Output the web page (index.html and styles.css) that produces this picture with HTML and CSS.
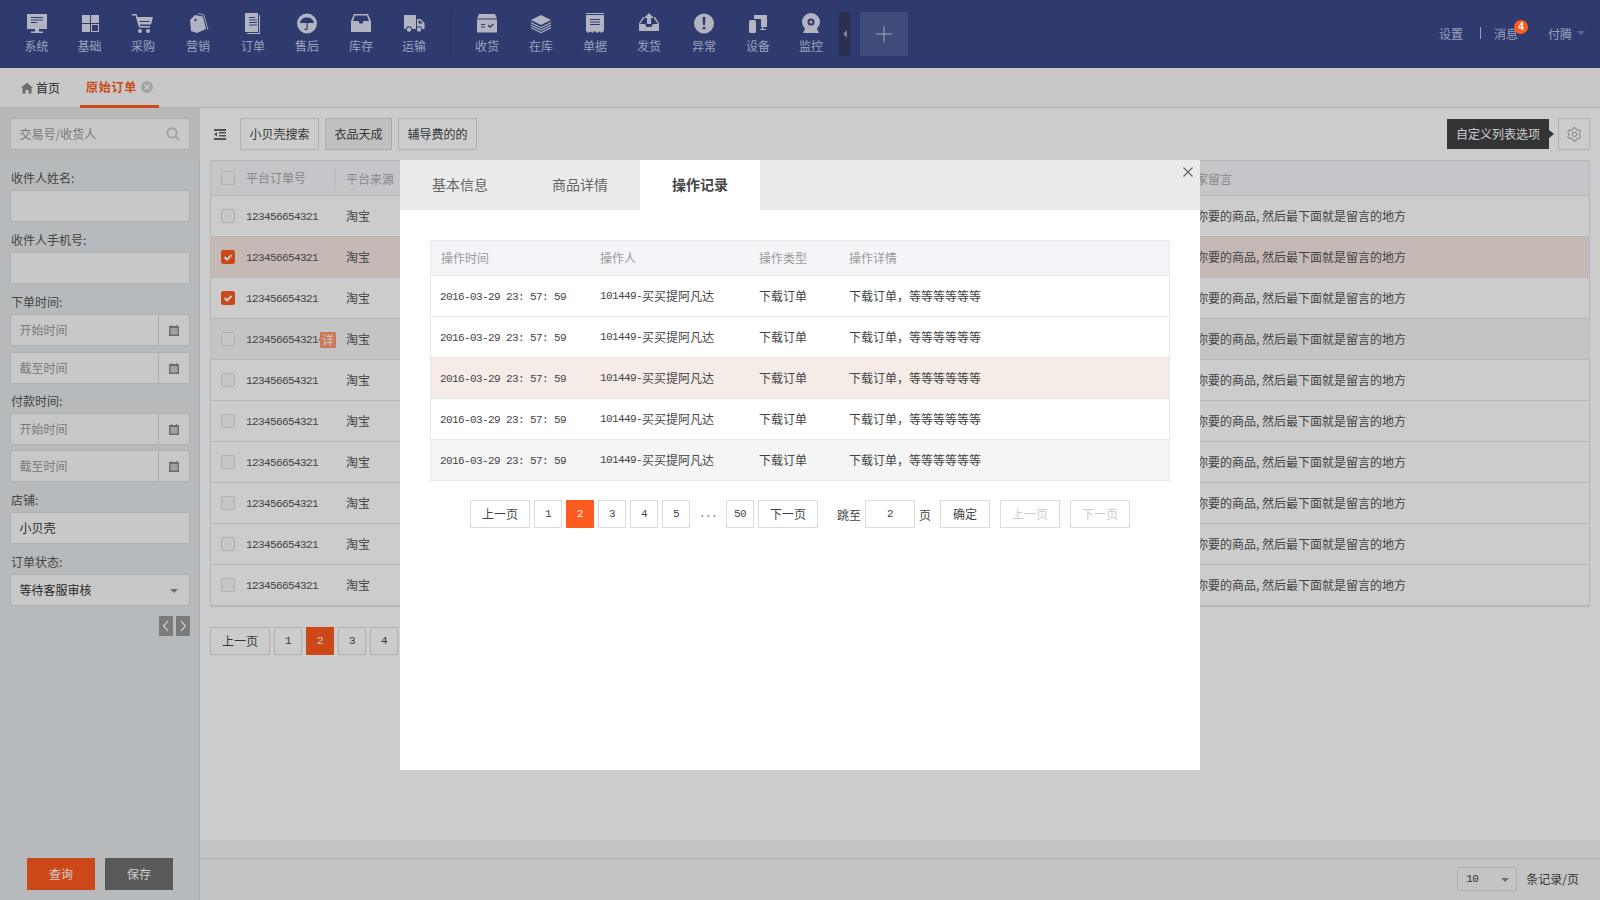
FILE: index.html
```html
<!DOCTYPE html>
<html lang="zh-CN">
<head>
    <meta charset="UTF-8">
    <title>原始订单</title>
    <link rel="stylesheet" href="styles.css">
</head>
<body>
<div class="app">
    <header class="topnav">
        <nav class="nav-group">
            <a class="nav-item narrow"><svg viewBox="0 0 22 22"><rect x="1" y="1" width="20" height="15"/><rect x="9" y="16" width="4" height="3"/><rect x="5" y="18.500" width="12" height="1.500"/><path class="cut" d="M5 4h12v1H5zM5 6.500h12v1H5zM5 9h6v1H5z"/></svg><span>系统</span></a>
            <a class="nav-item narrow"><svg viewBox="0 0 22 22"><rect x="3" y="2" width="8" height="8"/><rect x="12" y="2" width="8" height="8"/><rect x="3" y="11" width="8" height="8"/><path d="M12 11h8v8h-8zM13 12v6h6v-6z" fill-rule="evenodd"/></svg><span>基础</span></a>
            <a class="nav-item"><svg viewBox="0 0 22 22"><path d="M0 1h4.500l1 3H21l-2 7.500H7.800l.4 1.500H18v1.500H7L3.500 2.500H0z"/><circle cx="8" cy="18" r="2"/><circle cx="16" cy="18" r="2"/><path class="cut" d="M7.500 8h10v1h-10z"/></svg><span>采购</span></a>
            <a class="nav-item wide"><svg viewBox="0 0 22 22"><path d="M8 2l8 1.500L19 16l-9 4-6-2-1-11z"/><path class="line" d="M11 .5l6 1.500 4 15"/><circle class="cut" cx="8.500" cy="7" r="1.200"/></svg><span>营销</span></a>
            <a class="nav-item"><svg viewBox="0 0 22 22"><path d="M3 0h13v19H3z"/><path d="M17 2h1v19H5v-1h12z"/><path class="cut" d="M7 4h6v1H7zM7 6.500h8v1H7zM7 9h8v1H7zM7 11.500h8v1H7z"/></svg><span>订单</span></a>
            <a class="nav-item"><svg viewBox="0 0 22 22"><circle cx="11" cy="10.500" r="10"/><path class="cut" d="M4 10c.5-3.500 3.500-5.500 7-5.500s6.500 2 7 5.500zM10.500 10h1.200v5.500q0 1.500-1.500 1.500H8.500v-1.200h1.500q.5 0 .5-.5z"/></svg><span>售后</span></a>
            <a class="nav-item"><svg viewBox="0 0 22 22"><path d="M4 1h14l3 7v11H1V8zM5 2.500L3 8h5.500l1 2.500h3L13.500 8H19l-2-5.500z" fill-rule="evenodd"/></svg><span>库存</span></a>
            <a class="nav-item last"><svg viewBox="0 0 22 22"><path d="M1 2h12v14H1z"/><path d="M14 6h3.500l4 4v6H14zM15.500 7.500v3h4.500l-3-3z" fill-rule="evenodd"/><circle class="cut" cx="6" cy="16.500" r="3.200"/><circle class="cut" cx="16" cy="16.500" r="3.200"/><circle cx="6" cy="16.500" r="2.200"/><circle cx="16" cy="16.500" r="2.200"/></svg><span>运输</span></a>
        </nav>
        <div class="nav-divider"></div>
        <nav class="nav-group">
            <a class="nav-item"><svg viewBox="0 0 22 22"><path d="M3 1h16l2 4.500H1z"/><rect x="1" y="6.500" width="20" height="13"/><path class="cut" d="M5 11h4v1H5zM5 13.500h4v1H5z"/><path class="cut-line" d="M12 12l2 2 3.500-3"/></svg><span>收货</span></a>
            <a class="nav-item"><svg viewBox="0 0 22 22"><path d="M11 2l10 5-10 5L1 7z"/><path d="M1 9l10 5 10-5v1.200l-10 5-10-5zM1 11.500l10 5 10-5v1.200l-10 5-10-5zM1 14l10 5 10-5v1.200l-10 5-10-5z"/></svg><span>在库</span></a>
            <a class="nav-item"><svg viewBox="0 0 22 22"><path d="M2 0h18v1H2z"/><path d="M2 2h18v16l-2.500 2-2-1.500-2 1.500-3-2-2 2-2-1.500L4 20l-2-2z"/><path class="cut" d="M6 6h10v1H6zM6 8.500h10v1H6zM6 11h10v1H6z"/></svg><span>单据</span></a>
            <a class="nav-item"><svg viewBox="0 0 22 22"><path d="M11 0l5 5h-3v6H9V5H6z"/><path d="M5 4h1v1.500H5.800L2 11h5l1.500 3h5L15 11h5l-3.800-5.500H16V4h1l4 6.500V18H1v-7.500z"/></svg><span>发货</span></a>
            <a class="nav-item wide"><svg viewBox="0 0 22 22"><circle cx="11" cy="10.500" r="10"/><path class="cut" d="M9.500 4h3l-.5 8h-2z"/><circle class="cut" cx="11" cy="15" r="1.500"/></svg><span>异常</span></a>
            <a class="nav-item last"><svg viewBox="0 0 22 22"><path d="M7 2h13v12h-6V6H7z"/><rect x="2" y="7" width="7" height="13" rx="1.500"/><path d="M15 14h1.500v2H19v1h-6v-1h2z"/></svg><span>设备</span></a>
            <a class="nav-item"><svg viewBox="0 0 22 22"><circle cx="11" cy="9" r="9"/><circle class="cut" cx="11" cy="9" r="3.500"/><circle cx="11" cy="9" r="1.500"/><path d="M5.500 15h11L19 20H3z"/></svg><span>监控</span></a>
        </nav>
        <div class="nav-collapse"><i class="tri-left"></i></div>
        <div class="nav-add"><svg viewBox="0 0 16 16"><path d="M7.500 0h1v7.500H16v1H8.500V16h-1V8.500H0v-1h7.500z"/></svg></div>
        <div class="nav-user">
            <span>设置</span>
            <span class="nav-sep"></span>
            <span class="nav-msg">消息<b class="badge">4</b></span>
            <span class="nav-name">付腾<i class="tri-down"></i></span>
        </div>
    </header>

    <div class="tabbar">
        <a class="tab-home"><svg viewBox="0 0 12 12"><path d="M6 .5l6 5.500h-1.500v5.500H7.500V8h-3v3.500h-3V6H0z"/></svg>首页</a>
        <a class="tab-current">原始订单<svg class="tab-close" viewBox="0 0 12 12"><circle cx="6" cy="6" r="6"/><path class="x" d="M3.500 3.500l5 5M8.500 3.500l-5 5"/></svg></a>
    </div>

    <div class="workspace">
        <aside class="sidebar">
            <div class="side-search">
                <div class="input placeholder">交易号/收货人
                    <svg class="search-icon" viewBox="0 0 14 14"><circle cx="6" cy="6" r="4.700"/><path d="M9.500 9.500l3.500 3.500"/></svg>
                </div>
            </div>
            <div class="side-form">
                <label class="field-label">收件人姓名:</label>
                <div class="input"></div>
                <label class="field-label">收件人手机号:</label>
                <div class="input"></div>
                <label class="field-label">下单时间:</label>
                <div class="date-pair">
                    <div class="input date placeholder">开始时间<span class="date-btn"><svg viewBox="0 0 12 12"><path d="M1 2h2V1h1v1h4V1h1v1h2v10H1z"/><path class="cut-grid" d="M2 5h8M2 7h8M2 9h8M4 4v7M6 4v7M8 4v7"/></svg></span></div>
                    <div class="input date placeholder">截至时间<span class="date-btn"><svg viewBox="0 0 12 12"><path d="M1 2h2V1h1v1h4V1h1v1h2v10H1z"/><path class="cut-grid" d="M2 5h8M2 7h8M2 9h8M4 4v7M6 4v7M8 4v7"/></svg></span></div>
                </div>
                <label class="field-label">付款时间:</label>
                <div class="date-pair tight">
                    <div class="input date placeholder">开始时间<span class="date-btn"><svg viewBox="0 0 12 12"><path d="M1 2h2V1h1v1h4V1h1v1h2v10H1z"/><path class="cut-grid" d="M2 5h8M2 7h8M2 9h8M4 4v7M6 4v7M8 4v7"/></svg></span></div>
                    <div class="input date placeholder">截至时间<span class="date-btn"><svg viewBox="0 0 12 12"><path d="M1 2h2V1h1v1h4V1h1v1h2v10H1z"/><path class="cut-grid" d="M2 5h8M2 7h8M2 9h8M4 4v7M6 4v7M8 4v7"/></svg></span></div>
                </div>
                <label class="field-label">店铺:</label>
                <div class="input">小贝壳</div>
                <label class="field-label">订单状态:</label>
                <div class="input select">等待客服审核<i class="tri-down"></i></div>
                <div class="side-arrows">
                    <a><svg viewBox="0 0 14 20"><path d="M9 5L4.500 10 9 15"/></svg></a>
                    <a><svg viewBox="0 0 14 20"><path d="M5 5l4.500 5L5 15"/></svg></a>
                </div>
            </div>
            <div class="side-actions">
                <a class="btn-query">查询</a>
                <a class="btn-save">保存</a>
            </div>
        </aside>

        <main class="content">
            <div class="toolbar">
                <svg class="list-toggle" viewBox="0 0 12 11"><path d="M0 0h12v2H0zM5 3h7v1.500H5zM5 6h7v1.500H5zM0 9h12v2H0zM3 3v4.500L0 5.200z"/></svg>
                <a class="tool-btn">小贝壳搜索</a>
                <a class="tool-btn active">衣品天成</a>
                <a class="tool-btn">辅导费的的</a>
                <div class="toolbar-right">
                    <div class="tooltip">自定义列表选项</div>
                    <a class="gear-btn"><svg viewBox="0 0 16 16"><path d="M6.500 1h3l.4 2 1.500.8 1.900-.8 1.500 2.600-1.500 1.300v1.800l1.500 1.300-1.500 2.600-1.900-.8-1.500.8-.4 2.400h-3l-.4-2.400-1.500-.8-1.900.8L.7 10l1.500-1.300V6.900L.7 5.600l1.500-2.600 1.900.8 1.500-.8z"/><circle cx="8" cy="7.800" r="2.300"/></svg></a>
                </div>
            </div>

            <div class="order-table">
                <div class="order-row head"><span class="check"></span><span class="col-divided">平台订单号</span><span>平台来源</span><span>买家留言</span></div>
                <div class="order-row"><span class="check"></span><span class="num">123456654321</span><span>淘宝</span><span>选你要的商品, 然后最下面就是留言的地方</span></div>
                <div class="order-row picked"><span class="check on"><svg viewBox="0 0 14 14"><path d="M3.500 7l2.500 2.500 4.500-4.500"/></svg></span><span class="num">123456654321</span><span>淘宝</span><span>选你要的商品, 然后最下面就是留言的地方</span></div>
                <div class="order-row"><span class="check on"><svg viewBox="0 0 14 14"><path d="M3.500 7l2.500 2.500 4.500-4.500"/></svg></span><span class="num">123456654321</span><span>淘宝</span><span>选你要的商品, 然后最下面就是留言的地方</span></div>
                <div class="order-row hover"><span class="check"></span><span class="num has-tag">123456654321<em class="detail-tag">详</em></span><span>淘宝</span><span>选你要的商品, 然后最下面就是留言的地方</span></div>
                <div class="order-row"><span class="check"></span><span class="num">123456654321</span><span>淘宝</span><span>选你要的商品, 然后最下面就是留言的地方</span></div>
                <div class="order-row"><span class="check"></span><span class="num">123456654321</span><span>淘宝</span><span>选你要的商品, 然后最下面就是留言的地方</span></div>
                <div class="order-row"><span class="check"></span><span class="num">123456654321</span><span>淘宝</span><span>选你要的商品, 然后最下面就是留言的地方</span></div>
                <div class="order-row"><span class="check"></span><span class="num">123456654321</span><span>淘宝</span><span>选你要的商品, 然后最下面就是留言的地方</span></div>
                <div class="order-row"><span class="check"></span><span class="num">123456654321</span><span>淘宝</span><span>选你要的商品, 然后最下面就是留言的地方</span></div>
                <div class="order-row"><span class="check"></span><span class="num">123456654321</span><span>淘宝</span><span>选你要的商品, 然后最下面就是留言的地方</span></div>
            </div>

            <div class="pager main-pager">
                <a class="page wide">上一页</a>
                <a class="page num">1</a>
                <a class="page num current">2</a>
                <a class="page num">3</a>
                <a class="page num">4</a>
                <a class="page num">5</a>
            </div>

            <div class="content-foot">
                <div class="page-size num">10<i class="tri-down"></i></div>
                <span>条记录/页</span>
            </div>
        </main>
    </div>
</div>

<div class="overlay"></div>

<section class="modal">
    <div class="modal-tabs">
        <a class="modal-tab">基本信息</a>
        <a class="modal-tab">商品详情</a>
        <a class="modal-tab active">操作记录</a>
    </div>
    <svg class="modal-close" viewBox="0 0 10 10"><path d="M.5.500l9 9M9.500.500l-9 9"/></svg>

    <div class="log-table">
        <div class="log-row head"><span>操作时间</span><span>操作人</span><span>操作类型</span><span>操作详情</span></div>
        <div class="log-row"><span class="num">2016-03-29 23: 57: 59</span><span><i class="num">101449-</i>买买提阿凡达</span><span>下载订单</span><span>下载订单，等等等等等等</span></div>
        <div class="log-row"><span class="num">2016-03-29 23: 57: 59</span><span><i class="num">101449-</i>买买提阿凡达</span><span>下载订单</span><span>下载订单，等等等等等等</span></div>
        <div class="log-row picked"><span class="num">2016-03-29 23: 57: 59</span><span><i class="num">101449-</i>买买提阿凡达</span><span>下载订单</span><span>下载订单，等等等等等等</span></div>
        <div class="log-row"><span class="num">2016-03-29 23: 57: 59</span><span><i class="num">101449-</i>买买提阿凡达</span><span>下载订单</span><span>下载订单，等等等等等等</span></div>
        <div class="log-row grey"><span class="num">2016-03-29 23: 57: 59</span><span><i class="num">101449-</i>买买提阿凡达</span><span>下载订单</span><span>下载订单，等等等等等等</span></div>
    </div>

    <div class="pager modal-pager">
        <a class="page wide">上一页</a>
        <a class="page num">1</a>
        <a class="page num current">2</a>
        <a class="page num">3</a>
        <a class="page num">4</a>
        <a class="page num">5</a>
        <span class="page-gap num">...</span>
        <a class="page num">50</a>
        <a class="page wide">下一页</a>
        <span class="jump-label">跳至</span>
        <span class="jump-input num">2</span>
        <span class="jump-unit">页</span>
        <a class="page ok">确定</a>
        <a class="page wide off">上一页</a>
        <a class="page wide off last-page">下一页</a>
    </div>
</section>
</body>
</html>
```

FILE: styles.css
```css
* {
	box-sizing: border-box;
}

html, body {
	margin: 0;
	height: 900px;
	overflow: hidden;
}

body {
	font-family: "Noto Sans CJK SC", "Liberation Sans", sans-serif;
	font-size: 12px;
	color: #444;
	background: #fff;
}

i, em {
	font-style: normal;
}

.num {
	font-family: "Liberation Mono", "Noto Sans CJK SC", monospace;
	font-size: 11px;
	letter-spacing: -0.6px;
}

.app {
	display: flex;
	flex-direction: column;
	height: 900px;
}

/* top navigation */
.topnav {
	height: 68px;
	flex: none;
	display: flex;
	align-items: flex-start;
	padding: 12px 0 0 10px;
	background: #3b498b;
	color: #c4c9e8;
}

.nav-group {
	display: flex;
}

.nav-item {
	width: 54px;
	height: 44px;
	display: flex;
	flex-direction: column;
	align-items: center;
}

.nav-item.narrow {
	width: 53px;
}

.nav-item.wide {
	width: 56px;
}

.nav-item.last {
	width: 52px;
}

.nav-item svg {
	width: 22px;
	height: 22px;
	margin-top: 1px;
	fill: #dfe2f2;
}

.nav-item span {
	line-height: 16px;
	margin-top: 3px;
}

.nav-item .cut {
	fill: #3b498b;
}

.nav-item .cut-line {
	fill: none;
	stroke: #3b498b;
	stroke-width: 1.300;
}

.nav-item .line {
	fill: none;
	stroke: #dfe2f2;
	stroke-width: 0.800;
}

.nav-divider {
	width: 1px;
	height: 44px;
	margin: 0 9px 0 10px;
	background: #333a60;
}

.nav-collapse {
	width: 11px;
	height: 44px;
	margin-left: 1px;
	display: flex;
	align-items: center;
	justify-content: center;
	background: #363d66;
}

.tri-left {
	border-top: 4px solid transparent;
	border-bottom: 4px solid transparent;
	border-right: 4px solid #9da1b8;
}

.nav-add {
	width: 48px;
	height: 44px;
	margin-left: 10px;
	display: flex;
	align-items: center;
	justify-content: center;
	background: #4f5e96;
}

.nav-add svg {
	width: 16px;
	height: 16px;
	fill: #d0d4e8;
}

.nav-user {
	margin-left: auto;
	height: 42px;
	display: flex;
	align-items: center;
	padding-right: 15px;
}

.nav-sep {
	width: 1px;
	height: 12px;
	margin: 0 13px 0 17px;
	background: #c4c9e8;
}

.nav-msg {
	position: relative;
	margin-right: 30px;
}

.badge {
	position: absolute;
	left: 20px;
	top: -5px;
	z-index: 5;
	width: 14px;
	height: 14px;
	border-radius: 50%;
	background: #ff5b1f;
	color: #fff;
	font-size: 10px;
	line-height: 14px;
	text-align: center;
	font-family: "Liberation Sans", sans-serif;
}

.nav-name {
	display: flex;
	align-items: center;
}

.tri-down {
	display: inline-block;
	border-left: 4px solid transparent;
	border-right: 4px solid transparent;
	border-top: 4px solid #888;
}

.nav-name .tri-down {
	margin-left: 5px;
	border-top-color: #7880ac;
}

/* page tabs */
.tabbar {
	height: 40px;
	flex: none;
	display: flex;
	background: #fafafa;
	border-bottom: 1px solid #dcdcdc;
}

.tab-home {
	display: flex;
	align-items: center;
	padding: 0 0 0 21px;
	width: 80px;
	color: #333;
}

.tab-home svg {
	width: 12px;
	height: 12px;
	margin-right: 3px;
	fill: #888;
}

.tab-current {
	width: 79px;
	height: 40px;
	display: flex;
	align-items: center;
	padding-left: 6px;
	color: #ff5b1f;
	font-weight: 700;
	letter-spacing: 0.75px;
	border-bottom: 3px solid #ff5b1f;
}

.tab-close {
	width: 12px;
	height: 12px;
	margin-left: 4px;
	flex: none;
	fill: #ccc;
}

.tab-close .x {
	stroke: #fafafa;
	stroke-width: 1.500;
}

/* main area */
.workspace {
	flex: 1;
	display: flex;
	min-height: 0;
}

.sidebar {
	width: 200px;
	flex: none;
	display: flex;
	flex-direction: column;
	background: #e4e9ec;
	border-right: 1px solid #d6d9dc;
}

.side-search {
	height: 52px;
	padding: 10px 10px;
	margin-right: -1px;
	background: #e6e6e6;
}

.input {
	position: relative;
	height: 32px;
	line-height: 30px;
	padding-left: 8.5px;
	background: #fafafa;
	border: 1px solid #dcdcdc;
	color: #333;
}

.placeholder {
	color: #999;
}

.search-icon {
	position: absolute;
	right: 9px;
	top: 8px;
	width: 14px;
	height: 14px;
	fill: none;
	stroke: #ccc;
	stroke-width: 2;
}

.side-form {
	padding: 6px 9px 0 10px;
	display: flex;
	flex-direction: column;
}

.field-label {
	height: 24px;
	line-height: 24px;
	color: #555;
	padding-left: 1px;
}

.field-label ~ .input {
	margin-bottom: 6px;
}

.date-pair {
	display: flex;
	flex-direction: column;
	gap: 6px;
	margin-bottom: 5px;
}

.date-pair.tight {
	gap: 5px;
	margin-bottom: 6px;
}

.field-label ~ .date-pair .input {
	margin-bottom: 0;
}

.date {
	padding-right: 31px;
}

.date-btn {
	position: absolute;
	right: 0;
	top: 0;
	width: 31px;
	height: 30px;
	display: flex;
	align-items: center;
	justify-content: center;
	border-left: 1px solid #dcdcdc;
}

.date-btn svg {
	width: 12px;
	height: 12px;
	fill: #888;
}

.date-btn .cut-grid {
	fill: none;
	stroke: #fafafa;
	stroke-width: 0.700;
}

.select .tri-down {
	position: absolute;
	right: 11px;
	top: 14px;
}

.side-arrows {
	display: flex;
	justify-content: flex-end;
	gap: 3px;
	margin-top: 4px;
}

.side-arrows a {
	width: 14px;
	height: 20px;
	background: #9a9a9a;
}

.side-arrows svg {
	display: block;
	width: 14px;
	height: 20px;
	fill: none;
	stroke: #fff;
	stroke-width: 1.200;
}

.side-actions {
	margin-top: auto;
	display: flex;
	justify-content: center;
	gap: 10px;
	padding: 0 0 10px 1px;
}

.side-actions a {
	width: 68px;
	height: 32px;
	line-height: 32px;
	text-align: center;
	color: #fff;
}

.btn-query {
	background: #ff5b1f;
}

.btn-save {
	background: #707070;
}

.content {
	flex: 1;
	min-width: 0;
	display: flex;
	flex-direction: column;
	padding: 10px 10px 0;
}

.toolbar {
	height: 32px;
	flex: none;
	display: flex;
	align-items: center;
}

.list-toggle {
	width: 12px;
	height: 11px;
	margin: 0 14px 0 4px;
	fill: #666;
}

.tool-btn {
	height: 32px;
	line-height: 30px;
	padding: 0 8.5px;
	margin-right: 6px;
	border: 1px solid #dcdcdc;
	color: #444;
}

.tool-btn.active {
	background: #f0f0f0;
	border-color: #d6d6d6;
}

.toolbar-right {
	margin-left: auto;
	display: flex;
	align-items: center;
}

.tooltip {
	position: relative;
	width: 102px;
	height: 30px;
	line-height: 30px;
	text-align: center;
	margin-right: 9px;
	background: #404143;
	color: #fff;
}

.tooltip::after {
	content: "";
	position: absolute;
	right: -5px;
	top: 11px;
	border-top: 4px solid transparent;
	border-bottom: 4px solid transparent;
	border-left: 5px solid #404143;
}

.gear-btn {
	width: 32px;
	height: 32px;
	display: flex;
	align-items: center;
	justify-content: center;
	border: 1px solid #dcdcdc;
}

.gear-btn svg {
	width: 15px;
	height: 15px;
	fill: none;
	stroke: #999;
	stroke-width: 1;
}

.order-table {
	margin-top: 10px;
	flex: none;
	border: 1px solid #e4e4e4;
	border-top: 0;
}

.order-row {
	height: 41px;
	display: grid;
	grid-template-columns: 35px 100px 838px 1fr;
	align-items: center;
	padding-bottom: 2px;
	border-bottom: 1px solid #e4e4e4;
	color: #555;
	white-space: nowrap;
}

.order-row .num {
	margin-top: 4px;
}

.order-row.head {
	height: 36px;
	padding-bottom: 0;
	background: #f6f8fc;
	color: #aaa;
	border-top: 1px solid #e4e4e4;
}

.order-row.picked {
	background: #f5e8e3;
}

.order-row.hover {
	background: #f5f5f5;
}

.check {
	width: 14px;
	height: 14px;
	margin: 2px 0 0 10px;
	border: 1px solid #ddd;
	border-radius: 2px;
	background: #f7f8fa;
}

.head .check {
	margin-top: 0;
}

.check.on {
	background: #ff5b1f;
	border-color: #ff5b1f;
}

.check svg {
	display: block;
	width: 14px;
	height: 14px;
	margin: -1px;
	fill: none;
	stroke: #fff;
	stroke-width: 2;
}

.col-divided {
	position: relative;
	height: 20px;
	line-height: 20px;
}

.col-divided::after {
	content: "";
	position: absolute;
	left: 89px;
	top: 0;
	height: 20px;
	border-left: 1px solid #e6e8ee;
}

.has-tag {
	position: relative;
}

.detail-tag {
	position: absolute;
	left: 74px;
	top: 50%;
	margin-top: -8px;
	width: 16px;
	height: 16px;
	line-height: 16px;
	text-align: center;
	background: #ff9670;
	color: #fff;
	font-family: "Noto Sans CJK SC", sans-serif;
	font-size: 12px;
	letter-spacing: 0;
}

.detail-tag::before {
	content: "";
	position: absolute;
	left: -2px;
	top: 6px;
	border-top: 2px solid transparent;
	border-bottom: 2px solid transparent;
	border-right: 2px solid #ff9670;
}

/* pagers */
.pager {
	display: flex;
	align-items: center;
	gap: 4px;
}

.page {
	width: 28px;
	height: 28px;
	line-height: 26px;
	text-align: center;
	border: 1px solid #dcdcdc;
	color: #444;
	flex: none;
}

.page.wide {
	width: 60px;
}

.page.current {
	background: #ff5b1f;
	border-color: #ff5b1f;
	color: #fff;
}

.page.off {
	color: #ccc;
}

.main-pager {
	margin-top: 20px;
}

.content-foot {
	margin: auto -10px 0;
	height: 60px;
	flex: none;
	display: flex;
	align-items: flex-start;
	justify-content: flex-end;
	padding: 27px 21px 0 0;
	background: linear-gradient(#f5f5f5 18px, #dcdcdc 18px, #dcdcdc 19px, #f5f5f5 19px);
	gap: 9px;
	line-height: 24px;
}

.page-size {
	position: relative;
	width: 60px;
	height: 24px;
	line-height: 22px;
	padding-left: 8px;
	border: 1px solid #dcdcdc;
}

.page-size .tri-down {
	position: absolute;
	right: 7px;
	top: 10px;
}

/* dim layer and dialog */
.overlay {
	position: fixed;
	inset: 0;
	background: rgba(0, 0, 0, 0.2);
}

.modal {
	position: fixed;
	left: 400px;
	top: 160px;
	width: 800px;
	height: 610px;
	background: #fff;
}

.modal-tabs {
	height: 50px;
	display: flex;
	background: #ebebeb;
}

.modal-tab {
	width: 120px;
	height: 50px;
	line-height: 48px;
	text-align: center;
	font-size: 14px;
	color: #666;
}

.modal-tab.active {
	background: #fff;
	color: #444;
	font-weight: 700;
}

.modal-close {
	position: absolute;
	right: 7px;
	top: 7px;
	width: 10px;
	height: 10px;
	fill: none;
	stroke: #666;
	stroke-width: 1.200;
}

.log-table {
	margin: 30px 30px 0;
	border: 1px solid #e8e8e8;
	border-bottom: 0;
}

.log-row {
	height: 41px;
	display: grid;
	grid-template-columns: 160px 159px 90px 1fr;
	align-items: center;
	padding-left: 9px;
	padding-bottom: 2px;
	border-bottom: 1px solid #e8e8e8;
	color: #444;
	white-space: nowrap;
}

.log-row span.num {
	margin-top: 4px;
}

.log-row i.num {
	vertical-align: 2px;
}

.log-row.head {
	height: 35px;
	padding-left: 10px;
	grid-template-columns: 159px 159px 90px 1fr;
	background: #f4f5f9;
	color: #999;
}

.log-row.picked {
	background: #f5ece7;
}

.log-row.grey {
	background: #f5f5f5;
}

.modal-pager {
	margin-top: 19px;
	justify-content: center;
}

.page-gap {
	width: 28px;
	text-align: center;
	color: #666;
}

.jump-label {
	margin-left: 15px;
}

.jump-input {
	width: 50px;
	height: 28px;
	line-height: 26px;
	text-align: center;
	border: 1px solid #dcdcdc;
	flex: none;
}

.page.ok {
	width: 50px;
	margin: 0 6px 0 5px;
}

.page.last-page {
	margin-left: 6px;
}
```
